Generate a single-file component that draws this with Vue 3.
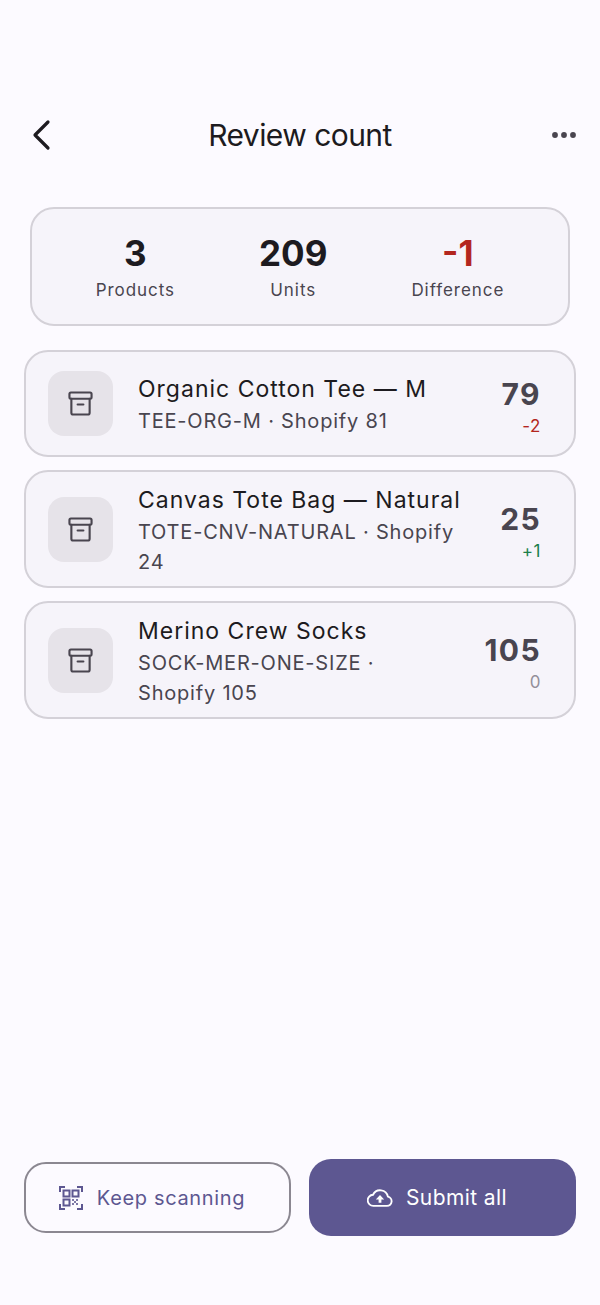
<script setup>
const stats = [
  { value: '3', label: 'Products' },
  { value: '209', label: 'Units' },
  { value: '-1', label: 'Difference', tone: 'neg' }
]

const items = [
  { name: 'Organic Cotton Tee — M', sub: 'TEE-ORG-M · Shopify 81', count: 79, diff: '-2', tone: 'neg' },
  { name: 'Canvas Tote Bag — Natural', sub: 'TOTE-CNV-NATURAL · Shopify 24', count: 25, diff: '+1', tone: 'pos' },
  { name: 'Merino Crew Socks', sub: 'SOCK-MER-ONE-SIZE · Shopify 105', count: 105, diff: '0', tone: 'zero' }
]
</script>

<template>
  <div class="page">
    <header class="topbar">
      <button class="icon-btn back">
        <svg width="24" height="32" viewBox="0 0 24 32" fill="none" stroke="#1d1b20" stroke-width="3.2" stroke-linecap="round" stroke-linejoin="round">
          <path d="M17 3 L4 16 L17 29" />
        </svg>
      </button>
      <h1 class="title">Review count</h1>
      <button class="icon-btn more">
        <svg width="24" height="8" viewBox="0 0 24 8" fill="#49454f">
          <circle cx="3" cy="4" r="2.9" />
          <circle cx="12" cy="4" r="2.9" />
          <circle cx="21" cy="4" r="2.9" />
        </svg>
      </button>
    </header>

    <section class="summary">
      <div v-for="s in stats" :key="s.label" class="stat">
        <div :class="['stat-value', s.tone]">{{ s.value }}</div>
        <div class="stat-label">{{ s.label }}</div>
      </div>
    </section>

    <section class="list">
      <article v-for="item in items" :key="item.name" class="card">
        <div class="thumb">
          <svg width="25" height="25" viewBox="0 0 26 26" fill="none" stroke="#49454f" stroke-width="2.2" stroke-linejoin="round" stroke-linecap="round">
            <rect x="1.500" y="1.500" width="23" height="6.500" rx="1.500" />
            <path d="M3.500 8 V22.500 a2 2 0 0 0 2 2 H20.500 a2 2 0 0 0 2 -2 V8" />
            <path d="M10 14 H16" />
          </svg>
        </div>
        <div class="info">
          <div class="name">{{ item.name }}</div>
          <div class="sub">{{ item.sub }}</div>
        </div>
        <div class="qty">
          <div class="count">{{ item.count }}</div>
          <div :class="['diff', item.tone]">{{ item.diff }}</div>
        </div>
      </article>
    </section>

    <footer class="actions">
      <button class="btn outline">
        <svg width="24" height="24" viewBox="0 0 24 24" fill="none" stroke="#5d5791" stroke-width="2">
          <path d="M1 6 V1 H6 M18 1 H23 V6 M1 18 V23 H6 M18 23 H23 V18" />
          <rect x="4.500" y="4.500" width="6" height="6" />
          <rect x="13.500" y="4.500" width="6" height="6" />
          <rect x="4.500" y="13.500" width="6" height="6" />
          <g fill="#5d5791" stroke="none" opacity="0.8">
            <rect x="13" y="13" width="2" height="2" />
            <rect x="17" y="13" width="2" height="2" />
            <rect x="15" y="15" width="2" height="2" />
            <rect x="13" y="17" width="2" height="2" />
            <rect x="17" y="17" width="2" height="2" />
          </g>
        </svg>
        <span>Keep scanning</span>
      </button>
      <button class="btn filled">
        <svg width="26" height="20" viewBox="0 0 28 20" fill="none" stroke="#fff" stroke-width="2" stroke-linejoin="round">
          <path d="M7 18.500 H21.500 a5 5 0 0 0 1 -9.900 A8.500 8.500 0 0 0 6.500 6.500 A6 6 0 0 0 7 18.500 Z" />
          <path d="M14 6.800 L18.500 11.500 H15.500 V15 H12.500 V11.500 H9.500 Z" fill="#fff" stroke="none" />
        </svg>
        <span>Submit all</span>
      </button>
    </footer>
  </div>
</template>

<style>
html,
body {
  margin: 0;
  background: #fcfaff;
}
</style>

<style scoped>
.page {
  height: 1305px;
  box-sizing: border-box;
  padding: 105px 24px 69px;
  display: flex;
  flex-direction: column;
  background: #fcfaff;
  font-family: Inter, "Liberation Sans", sans-serif;
  color: #1d1b20;
}

.topbar {
  display: flex;
  align-items: center;
  justify-content: space-between;
  height: 60px;
  margin-bottom: 42px;
}

.icon-btn {
  width: 36px;
  padding: 0;
  border: 0;
  background: none;
  display: flex;
  justify-content: flex-start;
}

.icon-btn.back {
  padding-left: 7px;
  box-sizing: border-box;
}

.icon-btn.more {
  justify-content: flex-end;
}

.title {
  margin: 0;
  font-size: 30px;
  font-weight: 400;
  letter-spacing: -0.55px;
}

.summary {
  margin: 0 6px 24px;
  height: 119px;
  box-sizing: border-box;
  border: 2px solid #d4d1d8;
  border-radius: 24px;
  background: #f6f4fa;
  display: flex;
  justify-content: center;
  align-items: center;
  gap: 84px;
}

.stat {
  text-align: center;
}

.stat-value {
  font-size: 35px;
  font-weight: 700;
  line-height: 42px;
}

.stat-label {
  margin-top: 4px;
  font-size: 17px;
  letter-spacing: 0.95px;
  line-height: 24px;
  color: #49454f;
}

.list {
  display: flex;
  flex-direction: column;
  gap: 13px;
}

.card {
  display: flex;
  align-items: center;
  gap: 25px;
  padding: 12.5px 33px 9.5px 22px;
  border: 2px solid #d4d1d8;
  border-radius: 24px;
  background: #f6f4fa;
}

.thumb {
  flex: none;
  width: 65px;
  height: 65px;
  margin: 6.5px 0 9.5px;
  border-radius: 16px;
  background: #e6e3e9;
  display: flex;
  align-items: center;
  justify-content: center;
}

.info {
  flex: 1;
  min-width: 0;
  margin-right: 6px;
}

.name {
  font-size: 23px;
  line-height: 30px;
  letter-spacing: 1px;
  color: #1d1b20;
}

.sub {
  margin-top: 2px;
  font-size: 20px;
  line-height: 30px;
  letter-spacing: 0.8px;
  color: #49454f;
}

.qty {
  flex: none;
  padding-top: 3px;
  text-align: right;
}

.count {
  font-size: 30px;
  font-weight: 700;
  line-height: 36px;
  letter-spacing: 1.4px;
  color: #49454f;
}

.diff {
  margin-top: 2px;
  font-size: 17px;
  line-height: 24px;
  letter-spacing: 0.6px;
}

.stat-value.neg,
.diff.neg {
  color: #b3261e;
}

.diff.pos {
  color: #1b7f4b;
}

.diff.zero {
  color: #938f99;
}

.actions {
  margin-top: auto;
  display: grid;
  grid-template-columns: 1fr 1fr;
  align-items: center;
  gap: 18px;
}

.btn {
  display: flex;
  align-items: center;
  justify-content: center;
  box-sizing: border-box;
  padding: 0 11px 0 0;
  font-family: inherit;
}

.btn.outline {
  height: 71px;
  gap: 14px;
  border: 2px solid #8b8791;
  border-radius: 22px;
  background: transparent;
  color: #5d5791;
  font-size: 20px;
  letter-spacing: 0.65px;
}

.btn.filled {
  height: 77px;
  gap: 13px;
  border: 0;
  border-radius: 22px;
  background: #5d5791;
  color: #fff;
  font-size: 21px;
  letter-spacing: 0.4px;
}
</style>
